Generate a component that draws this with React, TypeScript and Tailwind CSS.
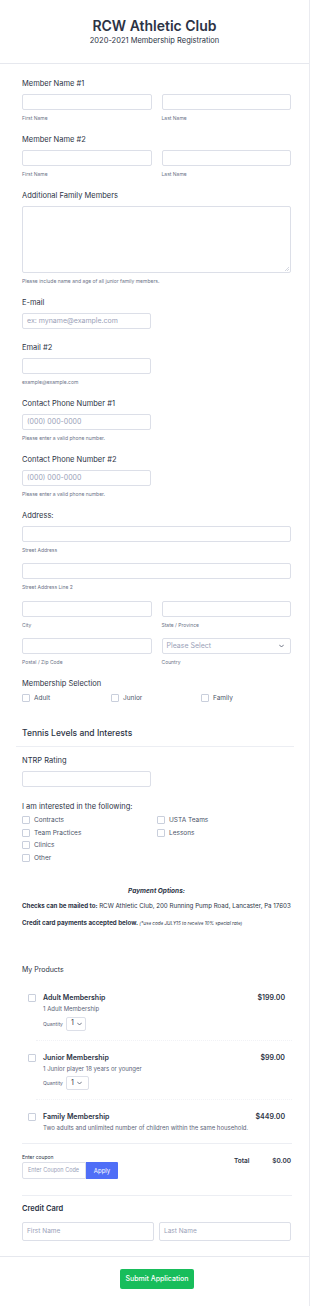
import React from "react";

const C = "text-[#2c3345]";

function Label({ children, className = "" }: { children: React.ReactNode; className?: string }) {
  return <div className={"text-[7.5px] leading-[10px] font-normal text-[#2c3345] " + className}>{children}</div>;
}

function Sub({ children, className = "" }: { children: React.ReactNode; className?: string }) {
  return <div className={"text-[5px] leading-[8px] text-[#6c7488] " + className}>{children}</div>;
}

function Box({ children, className = "" }: { children?: React.ReactNode; className?: string }) {
  return (
    <div className={"h-[16px] rounded-[2px] border border-[#dcdfe8] bg-white flex items-center px-[4px] text-[7px] text-[#9aa1b8] " + className}>
      {children}
    </div>
  );
}

function Check({ label }: { label: string }) {
  return (
    <div className="flex items-center h-[10px]">
      <div className="w-[8px] h-[8px] rounded-[1px] border border-[#c9cfdc] bg-white" />
      <span className="ml-[4px] text-[6.5px] leading-[10px] text-[#4b5468]">{label}</span>
    </div>
  );
}

function Chevron({ className = "" }: { className?: string }) {
  return (
    <svg className={className} width="5" height="4" viewBox="0 0 10 6" fill="none">
      <path d="M1 1l4 4 4-4" stroke="#4b5468" strokeWidth="1.6" strokeLinecap="round" strokeLinejoin="round" />
    </svg>
  );
}

function Product({
  title,
  desc,
  price,
  qty,
  qw,
}: {
  title: string;
  desc: string;
  price: string;
  qty?: boolean;
  qw?: string;
}) {
  return (
    <div className="flex pl-[6px] pr-[6px]">
      <div className="w-[8px] h-[8px] mt-[1px] rounded-[1px] border border-[#c9cfdc] bg-white shrink-0" />
      <div className="ml-[7px] flex-1">
        <div className="flex justify-between">
          <div className="text-[7px] leading-[10px] font-semibold text-[#2c3345]">{title}</div>
          <div className="text-[7px] leading-[10px] font-semibold text-[#2c3345]">{price}</div>
        </div>
        <div className="mt-[1px] text-[6px] leading-[9px] text-[#5c6478]">{desc}</div>
        {qty && (
          <div className="mt-[3.5px] flex items-center">
            <span className="text-[5px] leading-[8px] text-[#5c6478]">Quantity</span>
            <div className={"ml-[3px] h-[14px] rounded-[2px] border border-[#dcdfe8] flex items-center pl-[4px] gap-[3px] " + qw}>
              <span className="text-[7px] text-[#2c3345]">1</span>
              <Chevron />
            </div>
          </div>
        )}
      </div>
    </div>
  );
}

export default function App() {
  return (
    <div className="w-[310px] bg-white font-['Inter',sans-serif]">
      <div className="w-[310px] border-r border-[#eaebf0]">
        {/* Header */}
        <div className="h-[64px] border-b border-[#e6e8ee] flex flex-col items-center pt-[17px]">
          <div className={"text-[14px] leading-[18px] font-semibold " + C}>RCW Athletic Club</div>
          <div className={"mt-[1px] text-[7.5px] leading-[10px] " + C}>2020-2021 Membership Registration</div>
        </div>

        {/* Body */}
        <div className="pl-[22px] pr-[18px] pt-[15px] pb-[15px] border-b border-[#e6e8ee]">
          <Label>Member Name #1</Label>
          <div className="mt-[5px] grid grid-cols-2 gap-x-[10px]">
            <div>
              <Box />
              <Sub className="mt-[4px]">First Name</Sub>
            </div>
            <div>
              <Box />
              <Sub className="mt-[4px]">Last Name</Sub>
            </div>
          </div>

          <Label className="mt-[13px]">Member Name #2</Label>
          <div className="mt-[5px] grid grid-cols-2 gap-x-[10px]">
            <div>
              <Box />
              <Sub className="mt-[4px]">First Name</Sub>
            </div>
            <div>
              <Box />
              <Sub className="mt-[4px]">Last Name</Sub>
            </div>
          </div>

          <Label className="mt-[13px]">Additional Family Members</Label>
          <div className="mt-[5px] h-[67px] rounded-[2px] border border-[#dcdfe8] bg-white relative">
            <svg className="absolute right-[1px] bottom-[1px]" width="4" height="4" viewBox="0 0 4 4">
              <path d="M4 0L0 4M4 2L2 4" stroke="#b8bdcc" strokeWidth="0.6" />
            </svg>
          </div>
          <Sub className="mt-[4px]">Please include name and age of all junior family members.</Sub>

          <Label className="mt-[13px]">E-mail</Label>
          <Box className="mt-[5px] w-[129px]">ex: myname@example.com</Box>

          <Label className="mt-[14px]">Email #2</Label>
          <Box className="mt-[5px] w-[129px]" />
          <Sub className="mt-[4px]">example@example.com</Sub>

          <Label className="mt-[13px]">Contact Phone Number #1</Label>
          <Box className="mt-[5px] w-[129px]">(000) 000-0000</Box>
          <Sub className="mt-[4px]">Please enter a valid phone number.</Sub>

          <Label className="mt-[13px]">Contact Phone Number #2</Label>
          <Box className="mt-[5px] w-[129px]">(000) 000-0000</Box>
          <Sub className="mt-[4px]">Please enter a valid phone number.</Sub>

          <Label className="mt-[13px]">Address:</Label>
          <Box className="mt-[5px]" />
          <Sub className="mt-[4px]">Street Address</Sub>
          <Box className="mt-[9px]" />
          <Sub className="mt-[4px]">Street Address Line 2</Sub>
          <div className="mt-[10px] grid grid-cols-2 gap-x-[10px]">
            <div>
              <Box />
              <Sub className="mt-[4px]">City</Sub>
            </div>
            <div>
              <Box />
              <Sub className="mt-[4px]">State / Province</Sub>
            </div>
          </div>
          <div className="mt-[9px] grid grid-cols-2 gap-x-[10px]">
            <div>
              <Box />
              <Sub className="mt-[4px]">Postal / Zip Code</Sub>
            </div>
            <div>
              <Box className="justify-between pr-[6px]">
                <span>Please Select</span>
                <Chevron />
              </Box>
              <Sub className="mt-[4px]">Country</Sub>
            </div>
          </div>

          <Label className="mt-[13px]">Membership Selection</Label>
          <div className="mt-[4px] grid grid-cols-[89px_90px_1fr]">
            <Check label="Adult" />
            <Check label="Junior" />
            <Check label="Family" />
          </div>

          {/* Tennis section */}
          <div className="mt-[23px] -ml-[6px] -mr-[3px] pl-[6px] pb-[6px] border-b border-[#eceef3]">
            <div className="text-[8.5px] leading-[14px] font-medium text-[#2c3345]">Tennis Levels and Interests</div>
          </div>

          <Label className="mt-[9px]">NTRP Rating</Label>
          <Box className="mt-[5px] w-[129px]" />

          <Label className="mt-[15px]">I am interested in the following:</Label>
          <div className="mt-[3px] grid grid-cols-[135px_1fr] gap-y-[2.7px]">
            <Check label="Contracts" />
            <Check label="USTA Teams" />
            <Check label="Team Practices" />
            <Check label="Lessons" />
            <Check label="Clinics" />
            <div />
            <Check label="Other" />
          </div>

          {/* Payment */}
          <div className="mt-[23px] text-center text-[6.5px] leading-[10px] font-bold italic text-[#2c3345]">
            Payment Options:
          </div>
          <div className="mt-[5px] text-[6.2px] leading-[10px] text-[#2c3345] whitespace-nowrap">
            <span className="font-bold">Checks can be mailed to: </span>
            RCW Athletic Club, 200 Running Pump Road, Lancaster, Pa 17603
          </div>
          <div className="mt-[7px] text-[6.2px] leading-[10px] text-[#2c3345] whitespace-nowrap">
            <span className="font-bold">Credit card payments accepted below. </span>
            <span className="italic text-[4.6px]">(*use code JULY15 to receive 10% special rate)</span>
          </div>

          {/* Products */}
          <div className="mt-[36px] text-[7px] leading-[10px] font-normal text-[#2c3345]">My Products</div>
          <div className="mt-[7px]">
            <div className="pt-[11px] pb-[9.5px]">
              <Product title="Adult Membership" desc="1 Adult Membership" price="$199.00" qty qw="w-[20px]" />
            </div>
            <div className="ml-[14px] -mr-[1px] border-t border-dotted border-[#f1f2f6]" />
            <div className="pt-[11.5px] pb-[9px]">
              <Product title="Junior Membership" desc="1 Junior player 18 years or younger" price="$99.00" qty qw="w-[23px]" />
            </div>
            <div className="ml-[14px] -mr-[1px] border-t border-dotted border-[#f1f2f6]" />
            <div className="pt-[11.5px] pb-[11.5px]">
              <Product
                title="Family Membership"
                desc="Two adults and unlimited number of children within the same household."
                price="$449.00"
              />
            </div>
          </div>
          <div className="-mr-[1px] border-t border-[#eceef3]" />

          {/* Coupon */}
          <div className="flex justify-between items-start pb-[16px]">
            <div className="mt-[9px]">
              <div className="text-[5px] leading-[8px] text-[#2c3345]">Enter coupon</div>
              <div className="mt-[1px] flex h-[17px]">
                <div className="w-[64px] h-[17px] border border-[#dcdfe8] rounded-l-[2px] flex items-center pl-[5px] text-[5.5px] text-[#9aa1b8]">
                  Enter Coupon Code
                </div>
                <div className="w-[32px] h-[17px] bg-[#4f6ef7] rounded-r-[1px] flex items-center justify-center text-[6px] text-white">
                  Apply
                </div>
              </div>
            </div>
            <div className="mt-[12px] w-[57px] flex justify-between text-[6.5px] leading-[10px] font-semibold text-[#2c3345]">
              <span>Total</span>
              <span>$0.00</span>
            </div>
          </div>
          <div className="-mr-[1px] border-t border-[#eceef3]" />

          <div className="mt-[8px] text-[7.5px] leading-[10px] font-semibold text-[#2c3345]">Credit Card</div>
          <div className="mt-[8px] grid grid-cols-2 gap-x-[5px]">
            <div className="h-[19px] rounded-[2px] border border-[#dcdfe8] flex items-center pl-[4px] text-[6.5px] text-[#9aa1b8]">
              First Name
            </div>
            <div className="h-[19px] rounded-[2px] border border-[#dcdfe8] flex items-center pl-[4px] text-[6.5px] text-[#9aa1b8]">
              Last Name
            </div>
          </div>
        </div>

        {/* Footer */}
        <div className="h-[49px] flex justify-center pl-[5px] pt-[12px]">
          <div className="w-[74px] h-[20px] rounded-[2px] bg-[#18bd5b] flex items-center justify-center text-[7px] font-medium text-white">
            Submit Application
          </div>
        </div>
      </div>
    </div>
  );
}
